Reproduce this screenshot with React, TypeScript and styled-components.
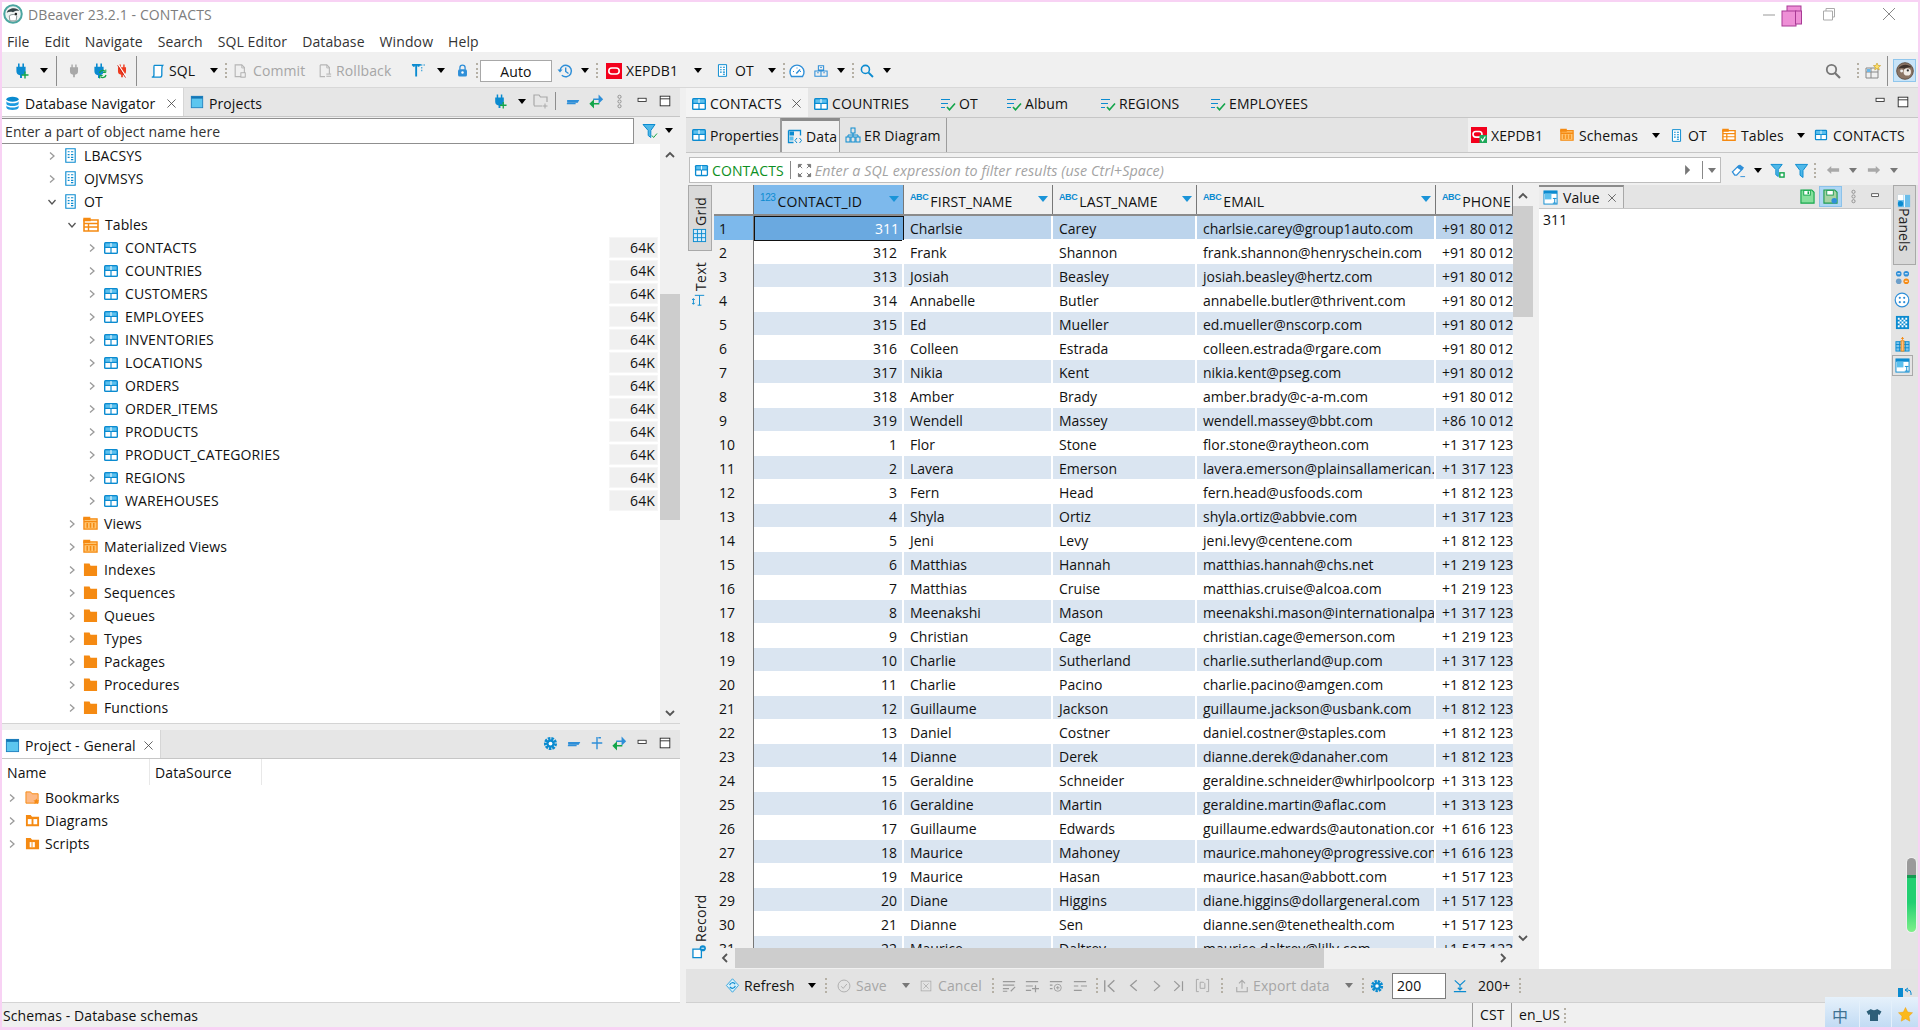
import React from "react";
import styled, { createGlobalStyle } from "styled-components";

const Global = createGlobalStyle`
  html, body { margin: 0; padding: 0; background: #fff; }
  body { font-family: "Open Sans", "Noto Sans", sans-serif; font-size: 14px; letter-spacing: .1px; color: #111; }
  * { box-sizing: border-box; }
`;

const BLUE = "#0b8bd0";
const MID = "#2f8fd8";
const ORANGE = "#f58a12";
const GREEN = "#12a54a";

type IconName =
  | "table" | "schema" | "tables" | "folder" | "plug" | "plugAdd" | "plugSync" | "plugOff" | "script" | "doc" | "docBack"
  | "sqlT" | "lock" | "history" | "oracle" | "oracleOk" | "gauge" | "boxes" | "search" | "perspective" | "dbStack"
  | "projects" | "folderAdd" | "collapse" | "link" | "vdots" | "min" | "max" | "close" | "funnelOk" | "gear" | "plus"
  | "bookmark" | "diagrams" | "scripts" | "dataTab" | "er" | "todo" | "expand" | "grid" | "textT" | "record" | "eraser"
  | "funnelAdd" | "funnel" | "left" | "right" | "save" | "saveAuto" | "panelsI" | "group" | "dotsRound" | "checker" | "calc" | "valueI"
  | "refresh" | "check" | "cancel" | "rEdit" | "rAdd" | "rCopy" | "rDel" | "first" | "prev" | "next" | "last" | "pageBox" | "export" | "fetch" | "schemaF" | "beaver" | "appLogo" | "star" | "shirt";

const Plug = ({ c }: { c: string }) => (
  <path d="M5 0.5h1.6v3.2h2.8V0.5H11v3.2h1.6v4.6a4 4 0 0 1-3.6 3.9V15H7v-2.8a4 4 0 0 1-3.6-3.9V3.7H5z" fill={c} />
);

const shapes: Record<IconName, React.ReactNode> = {
  table: (<><rect x="1" y="2" width="14" height="12" rx="1.5" fill={BLUE} /><rect x="2.4" y="8" width="5" height="4.6" fill="#fff" /><rect x="8.6" y="8" width="5" height="4.6" fill="#fff" /><rect x="2.4" y="3.4" width="11.2" height="3.4" fill="#5cc0ee" /><rect x="7.5" y="3" width="1" height="4" fill="#fff" /></>),
  schema: (<><path d="M3 .8h10v14.4H3z" fill="#fff" stroke={BLUE} strokeWidth="1.2" /><path d="M5 4h2M8.5 4H11M5 7h2M8.5 7H11M5 10h2M8.5 10H11M8.5 12.5H11" stroke={BLUE} strokeWidth="1.3" /></>),
  tables: (<><path d="M1 3h14v11H1z" fill="#fff" stroke={ORANGE} strokeWidth="1.6" /><path d="M1 1.5h6v2H1zM1 6.5h14M1 10h14M5.5 6v8" stroke={ORANGE} strokeWidth="1.4" fill={ORANGE} /></>),
  schemaF: (<><path d="M1 3h14v11H1z" fill="#ffc46f" stroke={ORANGE} strokeWidth="1.4" /><path d="M1 1.5h6v2H1zM1 6h14" stroke={ORANGE} strokeWidth="1.5" fill={ORANGE} /><path d="M4.5 7.5v5M8 7.5v5M11.5 7.5v5" stroke={ORANGE} strokeWidth="1.6" /></>),
  folder: <path d="M1 1.5h6l1 2.5h7v11H1z" fill={ORANGE} />,
  plug: <Plug c="#a8a8a8" />,
  plugAdd: (<><Plug c={BLUE} /><path d="M12 8.5v7M8.5 12h7" stroke={GREEN} strokeWidth="1.4" /></>),
  plugSync: (<><Plug c={BLUE} /><path d="M8.5 10a3.2 3.2 0 0 1 5.5-1.5M15 12a3.2 3.2 0 0 1-5.5 1.5" fill="none" stroke={GREEN} strokeWidth="1.3" /><path d="M14.8 6.5v3h-3M8.7 15.5v-3h3" fill="none" stroke={GREEN} strokeWidth="1" /></>),
  plugOff: (<><Plug c="#ee3b1f" /><path d="M4 1l9 14" stroke="#fff" strokeWidth="1.4" /><path d="M3 1.5l9 14" stroke="#c61a0e" strokeWidth="1" /></>),
  script: (<><path d="M5 1.5h9.5c-1 1-1 3-1 5v6c0 1.5-1 2.5-2.5 2.5H2c1 0 2.5-.8 2.5-2.5v-9C4.5 2 4.6 1.5 5 1.5z" fill="#fff" stroke={BLUE} strokeWidth="1.5" /></>),
  doc: (<><path d="M2.5 1h7.5l3 3v10.5h-10.5z" fill="none" stroke="#b5b5b5" strokeWidth="1.3" /><path d="M10 1v3.5h3" fill="none" stroke="#b5b5b5" /><rect x="9" y="10" width="5" height="5" fill="#f0f0f0" stroke="#a8a8a8" /></>),
  docBack: (<><path d="M2.5 1h7.5l3 3v7M8 14.5H2.5V1" fill="none" stroke="#b5b5b5" strokeWidth="1.3" /><path d="M10 1v3.5h3" fill="none" stroke="#b5b5b5" /><path d="M9.5 11.5h5.5M15 14h-5.5" stroke="#a8a8a8" /></>),
  sqlT: (<><path d="M1 2h9.5M3 2v2M5.5 2v12.5M8 2v2" stroke={BLUE} strokeWidth="2" fill="none" /><path d="M11 2h1M13.5 2h1M11 5h1M11 8h1" stroke={BLUE} strokeWidth="1.6" /></>),
  lock: (<><path d="M4.8 7V4.5a3.2 3.2 0 0 1 6.4 0V7" fill="none" stroke={MID} strokeWidth="1.6" /><rect x="2.5" y="6.5" width="11" height="9" rx="2" fill={MID} /><circle cx="8" cy="10.5" r="1.5" fill="#fff" /></>),
  history: (<><path d="M3 8a5.7 5.7 0 1 1 1.8 4.2" fill="none" stroke={MID} strokeWidth="1.5" /><path d="M.5 6.5l2.5 3 2.6-3" fill={MID} /><path d="M8.7 4.5v4l2.8 2" fill="none" stroke={MID} strokeWidth="1.4" /></>),
  oracle: (<><rect x="0" y="0" width="16" height="16" fill="#f3001c" /><rect x="2.8" y="5" width="10.4" height="6" rx="3" fill="none" stroke="#fff" strokeWidth="1.6" /></>),
  oracleOk: (<><rect x="0" y="0" width="16" height="16" fill="#f3001c" /><rect x="2" y="4.5" width="9" height="5.6" rx="2.8" fill="none" stroke="#fff" strokeWidth="1.6" /><rect x="8.5" y="8" width="7.5" height="8" fill="#1fa85a" /><path d="M10 11.5l1.7 2.4 2.6-4.4" stroke="#fff" strokeWidth="1.2" fill="none" /></>),
  gauge: (<><path d="M2.5 13.5A7 7 0 1 1 13.5 13.5z" fill="#fff" stroke={MID} strokeWidth="1.4" /><path d="M7.3 10.5l3.8-4" stroke={MID} strokeWidth="1.5" /><path d="M4 8.5h1M8 4.5v1M12 8.5h-1" stroke={MID} /></>),
  boxes: (<><path d="M5 2h6v5H5zM1 8h7v6H1zM8 8h7v6H8z" fill="none" stroke={MID} strokeWidth="1.2" /><path d="M7 4h2M3.5 10h2M10.5 10h2" stroke={MID} /></>),
  search: (<><circle cx="6.2" cy="6.2" r="4.6" fill="none" stroke={BLUE} strokeWidth="1.8" /><path d="M9.8 9.8l5 5" stroke={BLUE} strokeWidth="2.2" /></>),
  perspective: (<><path d="M1 5h12v10H1zM1 9h12M6 5v10" fill="none" stroke="#888" /><rect x="2" y="6" width="3.5" height="3" fill="#6db8e8" /><path d="M12 0l1 2.4 2.6.2-2 1.7.7 2.6-2.3-1.4-2.3 1.4.7-2.6-2-1.7 2.6-.2z" fill="#ffe066" stroke="#c49a20" strokeWidth=".6" /></>),
  dbStack: (<><ellipse cx="8" cy="3.5" rx="6.5" ry="2.7" fill={BLUE} /><path d="M1.5 5.5c1 3 12 3 13 0v3c-1 3-12 3-13 0zM1.5 10c1 3 12 3 13 0v2.5c-1 3.2-12 3.2-13 0z" fill="#1c9be0" /></>),
  projects: (<><rect x="1.5" y="1.5" width="13" height="13" fill="#5cc6ef" stroke="#1e80bf" /><rect x="1.5" y="1.5" width="13" height="2.6" fill="#1476b5" /></>),
  folderAdd: (<><path d="M1 12.5V2h5l1.5 2H14v5M9 13H1" fill="none" stroke="#a8a8a8" strokeWidth="1.2" /><path d="M12 10.5v5M9.5 13h5" stroke="#a8a8a8" /></>),
  collapse: <path d="M2 7.5h12l-1 1.8H2zM1 11h10" stroke={MID} strokeWidth="1.4" fill={MID} />,
  link: (<><path d="M4.5 5.5H14M14 5.5l-3-3v6z" stroke={MID} strokeWidth="1.6" fill={MID} /><path d="M1.5 10.5H11M1.5 10.5l3-3v6z" stroke={GREEN} strokeWidth="1.6" fill={GREEN} /></>),
  vdots: (<><circle cx="8" cy="3" r="1.7" fill="none" stroke="#8f8f8f" /><circle cx="8" cy="8" r="1.7" fill="none" stroke="#8f8f8f" /><circle cx="8" cy="13" r="1.7" fill="none" stroke="#8f8f8f" /></>),
  min: <rect x="2.5" y="4" width="10" height="4" fill="#fff" stroke="#222" />,
  max: (<><rect x="2.5" y="2.5" width="11" height="11" fill="#fff" stroke="#222" /><path d="M2.5 5.5h11" stroke="#222" /></>),
  close: <path d="M3 3l10 10M13 3L3 13" stroke="#444" strokeWidth="1" />,
  funnelOk: (<><path d="M1 1.5h12L8.8 7.5v7l-2.6-2V7.5z" fill="#4fb8e8" stroke={BLUE} /><path d="M10 12.5l1.6 2 3.4-4" stroke={GREEN} fill="none" /></>),
  gear: (<><circle cx="8" cy="8" r="5.3" fill="none" stroke={BLUE} strokeWidth="3.4" strokeDasharray="2.6 1" /><circle cx="8" cy="8" r="4.4" fill={BLUE} /><circle cx="8" cy="8" r="2" fill="#fff" /></>),
  plus: <path d="M8 1v14M2 8h12M9.5 2h3" stroke={MID} strokeWidth="1.6" />,
  bookmark: (<><path d="M1 2h5l1.5 2H14v10H1z" fill="#fdb985" stroke={ORANGE} /><path d="M12 9l1 2 2.2.2-1.7 1.4.6 2.2-2.1-1.2-2 1.2.5-2.2-1.6-1.4 2.2-.2z" fill={ORANGE} /></>),
  diagrams: (<><path d="M1 2h5l1.5 2H15v10H1z" fill={ORANGE} /><rect x="3" y="6.5" width="4" height="5.5" fill="#fff" /><rect x="9" y="6.5" width="4" height="5.5" fill="#fff" /></>),
  scripts: (<><path d="M1 2h5l1.5 2H15v10H1z" fill={ORANGE} /><path d="M5 6.5h5.5v5.5H5z" fill="#fff" /><path d="M7.5 6.5v5.5" stroke={ORANGE} /></>),
  dataTab: (<><path d="M1.5 1.5h12v5M1.5 1.5v12h5" fill="none" stroke={BLUE} strokeWidth="1.3" /><rect x="2.5" y="2.5" width="4.5" height="4" fill={BLUE} /><rect x="2.5" y="7.5" width="4" height="4" fill="#5cc0ee" /><path d="M10 9l-2 2.5 2 2.5M12.5 9l2 2.5-2 2.5" fill="none" stroke={BLUE} /></>),
  er: (<><rect x="6" y="1" width="4" height="5" fill="none" stroke={BLUE} /><rect x="1" y="10" width="4" height="5" fill="none" stroke={BLUE} /><rect x="6" y="10" width="4" height="5" fill="none" stroke={BLUE} /><rect x="11" y="10" width="4" height="5" fill="none" stroke={BLUE} /><path d="M8 6v2M3 10V8h10v2M8 8v2" fill="none" stroke={BLUE} /></>),
  todo: (<><path d="M1 3.5h9M1 7.5h7M1 11.5h4" stroke={BLUE} strokeWidth="1.2" /><path d="M7 11l2.5 2.8L15 7.5" fill="none" stroke={GREEN} strokeWidth="1.6" /></>),
  expand: <path d="M1.5 1.5h3.5l-3.500 3.500zM14.500 1.500h-3.500l3.500 3.500zM1.500 14.500h3.500l-3.500-3.500zM14.500 14.500h-3.500l3.500-3.500z M2 2l3.500 3.500M14 2l-3.500 3.500M2 14l3.500-3.500M14 14l-3.500-3.500" stroke="#777" fill="#777" />,
  grid: (<><rect x="1.5" y="1.5" width="13" height="13" fill="#d8ecf8" stroke={BLUE} /><path d="M1.5 6h13M1.500 10.300h13M5.800 1.500v13M10.200 1.500v13" stroke={BLUE} /></>),
  textT: <path d="M3 2.500h10M8 2.500V13M6 13h4M1.500 6v6M0 7.500l1.500-1.500L3 7.500M0 10.500L1.500 12 3 10.500" stroke={BLUE} fill="none" />,
  record: (<><path d="M1 5.500h8l1 1v8H1z" fill="#fff" stroke={BLUE} strokeWidth="1.4" /><circle cx="11.5" cy="4.5" r="3.3" fill={BLUE} /><path d="M10 4.500h3" stroke="#fff" /></>),
  eraser: (<><path d="M1.500 9.500L8 3l4 3.500L6 13H4z" fill="#fff" stroke={MID} strokeWidth="1.4" /><path d="M6 4.800L9.500 1.500l4.500 3.500-3 3z" fill={MID} /><path d="M10 14.500h5" stroke={MID} /></>),
  funnelAdd: (<><path d="M1 1.500h12L8.800 7v7.500l-2.600-2V7z" fill="#4fb8e8" stroke={BLUE} /><rect x="10.5" y="10.5" width="4.5" height="4.5" fill="#fff" stroke={GREEN} strokeWidth="1.5" /></>),
  funnel: <path d="M1.500 1.500h13L9.600 8v7.500l-3.200-2.500V8z" fill="#4fb8e8" stroke={BLUE} />,
  left: <path d="M1 8l5-4.500V6h9v4H6v2.500z" fill="#a9a9a9" />,
  right: <path d="M15 8l-5-4.500V6H1v4h9v2.500z" fill="#a9a9a9" />,
  save: (<><path d="M1 1h11.500L15 3.500V15H1z" fill="#85df9c" stroke="#13a64a" strokeWidth="1.2" /><rect x="4" y="1.5" width="7" height="5" fill="#fff" stroke="#13a64a" /><rect x="8" y="2.5" width="1.6" height="3" fill="#13a64a" /></>),
  saveAuto: (<><path d="M1 1h11.500L15 3.500V15H1z" fill="#a7d3a3" stroke="#1e9c50" strokeWidth="1.2" /><rect x="4" y="1.5" width="7" height="5" fill="#fff" stroke="#1e9c50" /><circle cx="12" cy="12.5" r="3" fill={MID} /></>),
  panelsI: (<><rect x="1" y="1" width="14" height="14" fill="#69bdea" /><rect x="8" y="1" width="1" height="14" fill="#fff" /><rect x="1" y="1" width="6.5" height="6" fill="#fff" /><circle cx="4" cy="11" r="3" fill={BLUE} /></>),
  group: (<><circle cx="4" cy="4" r="3" fill={MID} /><circle cx="12" cy="4" r="3" fill={MID} /><circle cx="4" cy="12" r="3" fill="#6d9fc9" /><circle cx="12" cy="12" r="3" fill={ORANGE} /><path d="M2.500 4h3M10.500 4h3M10.500 12h3" stroke="#fff" /></>),
  dotsRound: (<><circle cx="8" cy="8" r="6.8" fill="#fff" stroke={MID} strokeWidth="1.2" /><circle cx="5.8" cy="5.8" r="1.1" fill={MID} /><circle cx="10.2" cy="5.8" r="1.1" fill={MID} /><circle cx="5.8" cy="10.2" r="1.1" fill={MID} /><circle cx="10.2" cy="10.2" r="1.1" fill={MID} /></>),
  checker: (<><rect x="1" y="1" width="14" height="14" fill={BLUE} /><path d="M3 3h2v2H3zM7 3h2v2H7zM11 3h2v2h-2zM5 5h2v2H5zM9 5h2v2H9zM3 7h2v2H3zM7 7h2v2H7zM11 7h2v2h-2zM5 9h2v2H5zM9 9h2v2H9zM3 11h2v2H3zM7 11h2v2H7zM11 11h2v2h-2z" fill="#fff" /></>),
  calc: (<><rect x="1" y="5" width="14" height="10" fill="#7ec6ee" stroke={BLUE} /><path d="M1 8h14M1 11.500h14M5 5v10M11 5v10" stroke={BLUE} /><rect x="6.5" y="4" width="3" height="11" fill="#fbbf80" stroke={ORANGE} /><path d="M8 0v3M6.500 1.500h3" stroke={ORANGE} /></>),
  valueI: (<><rect x="1" y="1" width="14" height="14" fill="#fff" stroke={BLUE} /><rect x="1" y="1" width="14" height="3" fill={BLUE} /><rect x="2" y="4" width="7" height="6" fill="#5cc0ee" /><path d="M10.500 9h4M12.500 9v5M10.500 14h4" stroke={BLUE} /></>),
  refresh: (<><path d="M8 .8l6.500 7-6.500 7.400L1.500 8z" fill="#d4effb" stroke="#35a4de" /><path d="M5 7.500A3.200 3.200 0 0 1 10.800 6.500M11 8.500a3.200 3.200 0 0 1-5.800 1" fill="none" stroke={BLUE} strokeWidth="1.3" /></>),
  check: (<><circle cx="8" cy="8" r="6.8" fill="none" stroke="#a8a8a8" /><path d="M4.800 8.300l2.300 2.400 4.200-5" fill="none" stroke="#a8a8a8" /></>),
  cancel: (<><rect x="1.5" y="1.5" width="13" height="13" fill="none" stroke="#a8a8a8" /><path d="M4.500 4.500l7 7M11.500 4.500l-7 7" stroke="#a8a8a8" /></>),
  rEdit: <path d="M1 3h14M1 7h13M1 11h7M1 14h5M10 14l5-5" stroke="#9a9a9a" strokeWidth="1.3" fill="none" />,
  rAdd: <path d="M1 3h14M1 8h8M1 13h6M12 7v8M8 11h8" stroke="#9a9a9a" strokeWidth="1.4" fill="none" />,
  rCopy: (<><path d="M1 3h14M1 7h3M1 11h3" stroke="#9a9a9a" strokeWidth="1.3" /><circle cx="10" cy="10" r="4" fill="none" stroke="#9a9a9a" /><path d="M10 8v4M8 10h4" stroke="#9a9a9a" /></>),
  rDel: <path d="M1 3h14M1 8h5M9 8h7M1 13h9" stroke="#9a9a9a" strokeWidth="1.4" />,
  first: <path d="M2 1.500v13M13 1.500L6 8l7 6.500" stroke="#999" strokeWidth="1.6" fill="none" />,
  prev: <path d="M12 1.500L4.500 8l7.500 6.500" stroke="#999" strokeWidth="1.6" fill="none" />,
  next: <path d="M4 1.500L11.500 8 4 14.500" stroke="#999" strokeWidth="1.6" fill="none" />,
  last: <path d="M14 1.500v13M3 1.500L10 8l-7 6.500" stroke="#999" strokeWidth="1.6" fill="none" />,
  pageBox: <path d="M4 1.500H1.500v13H4M12 1.500h2.500v13H12M5.500 4.500h3.500l1.500 1.500v5h-5z" stroke="#a8a8a8" fill="none" />,
  export: <path d="M8 11V1.500M4.500 5L8 1.500 11.500 5M2 9v5.500h12V9" stroke="#a8a8a8" strokeWidth="1.2" fill="none" />,
  fetch: <path d="M1 14.500h14M2 1.500L8 7l6-5.500M8 7v5M5.500 10L8 12.500 10.500 10" stroke={BLUE} strokeWidth="1.3" fill="none" />,
  beaver: (<><circle cx="8" cy="8" r="7.400" fill="#8a7464" stroke="#5d4d42" strokeWidth=".8" /><path d="M2 6c2-4 9-5 12-1-3-1-5 0-6 1-2-1-4-1-6 0z" fill="#3f332c" /><circle cx="10" cy="8.800" r="3.300" fill="#f1ece6" /><circle cx="5" cy="8" r="1.300" fill="#eee" /><circle cx="10.500" cy="7.500" r="1" fill="#333" /></>),
  appLogo: (<><circle cx="8" cy="8" r="7" fill="#eef2f1" stroke="#4aa5a0" strokeWidth="1.6" /><path d="M3 7c1-4 8-5 10-1.500-2-.5-4 0-5 1-1.500-.5-3.500-.5-5 .5z" fill="#37474a" /><path d="M5 9.500c1.500-1.500 5-1.500 6 0l-.5 4h-5z" fill="#fff" stroke="#6a7a7a" strokeWidth=".6" /><circle cx="10.300" cy="8" r="1" fill="#222" /></>),
  star: <path d="M8 .5l2.300 4.900 5.200.7-3.800 3.700.9 5.300L8 12.500l-4.600 2.600.9-5.300L.5 6.100l5.200-.7z" fill="#fbb91d" stroke="#f0a010" strokeWidth=".5" />,
  shirt: <path d="M5 2L0.500 4.500 2.500 8l1.500-.8V14h8V7.200l1.500.8 2-3.500L11 2c-.5 1.500-5.500 1.500-6 0z" fill="#2d5f79" />,
};

const Svg = styled.svg<{ $s: number }>`
  width: ${(p) => p.$s}px;
  height: ${(p) => p.$s}px;
  flex: none;
  display: block;
`;

const Ic = ({ n, s = 16 }: { n: IconName; s?: number }) => (
  <Svg $s={s} viewBox="0 0 16 16">{shapes[n]}</Svg>
);

/* ---------- generic toolbar parts ---------- */
const Slot = styled.span<{ $ml?: number; $w?: number }>`
  display: inline-flex;
  align-items: center;
  justify-content: center;
  flex: none;
  margin-left: ${(p) => p.$ml ?? 0}px;
  ${(p) => (p.$w ? `width: ${p.$w}px;` : "")}
`;

const Label = styled.span<{ $ml?: number; $w?: number; $dim?: boolean }>`
  flex: none;
  white-space: nowrap;
  margin-left: ${(p) => p.$ml ?? 0}px;
  ${(p) => (p.$w ? `width: ${p.$w}px;` : "")}
  color: ${(p) => (p.$dim ? "#a6a6a6" : "#111")};
`;

const StripLabel = styled.span`
  line-height: 31px;
`;

const Caret = styled.span<{ $ml?: number; $grey?: boolean }>`
  flex: none;
  width: 0;
  height: 0;
  margin-left: ${(p) => p.$ml ?? 0}px;
  border-left: 4.5px solid transparent;
  border-right: 4.5px solid transparent;
  border-top: 5px solid ${(p) => (p.$grey ? "#777" : "#000")};
`;

const Dots = styled.span<{ $ml?: number }>`
  flex: none;
  width: 2px;
  height: 15px;
  margin-left: ${(p) => p.$ml ?? 0}px;
  border-left: 2px dotted #b5b0a5;
`;

const Sep = styled.span<{ $ml?: number; $h?: number }>`
  flex: none;
  width: 1px;
  height: ${(p) => p.$h ?? 30}px;
  margin-left: ${(p) => p.$ml ?? 0}px;
  background: #8d8d8d;
`;

/* ---------- page ---------- */
const Page = styled.div`
  position: relative;
  width: 1920px;
  height: 1030px;
  overflow: hidden;
  display: flex;
  flex-direction: column;
  background: #f0f0f0;
  border-top: 2px solid #f8d2f4;
  border-left: 2px solid #f8d2f4;
  border-right: 2px solid #f8d2f4;
  border-bottom: 3px solid #f8d2f4;
`;

const TitleBar = styled.header`
  height: 28px;
  flex: none;
  background: #fff;
  display: flex;
  align-items: center;
  padding-bottom: 4px;
  color: #7d7d7d;
  font-size: 14px;
`;

const TitleText = styled.span`
  margin-left: 5px;
`;

const WinButtons = styled.div`
  margin-left: auto;
  display: flex;
  align-items: center;
  padding-right: 22px;
  gap: 46px;
`;

const WinGlyph = styled.svg`
  width: 14px;
  height: 14px;
  display: block;
`;

const MenuBar = styled.nav`
  height: 22px;
  flex: none;
  background: #fff;
  display: flex;
  align-items: center;
  padding-left: 5px;
  gap: 15px;
  color: #333;
`;

const Toolbar = styled.div`
  height: 36px;
  flex: none;
  display: flex;
  align-items: center;
  padding-top: 2px;
  background: #f0f0f0;
  border-bottom: 1px solid #d8d8d8;
`;

const AutoBox = styled.span`
  flex: none;
  width: 72px;
  height: 22px;
  margin-left: 2px;
  background: #fff;
  border: 1px solid #a8a8a8;
  display: flex;
  align-items: center;
  justify-content: center;
  padding-top: 2px;
`;

const RightTools = styled.div`
  margin-left: auto;
  display: flex;
  align-items: center;
  padding-right: 2px;
`;

const BeaverBtn = styled.span`
  width: 23px;
  height: 23px;
  margin-left: 5px;
  background: #c8e4f8;
  border: 1px solid #90c6ec;
  display: flex;
  align-items: center;
  justify-content: center;
`;

const Main = styled.main`
  flex: 1;
  min-height: 0;
  display: flex;
`;

const LeftCol = styled.section`
  width: 678px;
  flex: none;
  display: flex;
  flex-direction: column;
`;

const StripBar = styled.div<{ $h: number; $bg?: string }>`
  height: ${(p) => p.$h}px;
  flex: none;
  display: flex;
  align-items: stretch;
  background: ${(p) => p.$bg ?? "#e6e6e6"};
  border-bottom: 1px solid #c6c6c6;
`;

const ViewTab = styled.div<{ $w: number }>`
  width: ${(p) => p.$w}px;
  flex: none;
  display: flex;
  align-items: center;
  padding-left: 3px;
  padding-top: 2px;
  gap: 5px;
  background: #fff;
  border-right: 1px solid #d6d6d6;
`;

const TabClose = styled.span`
  margin-left: auto;
  margin-right: 5px;
  display: flex;
`;

const StripTools = styled.div`
  margin-left: auto;
  display: flex;
  align-items: center;
  padding-right: 8px;
  padding-bottom: 2px;
`;

const FilterLine = styled.div`
  height: 27px;
  flex: none;
  display: flex;
  align-items: center;
  background: #f0f0f0;
`;

const FilterInput = styled.div`
  width: 632px;
  height: 26px;
  flex: none;
  background: #fff;
  border: 1px solid #8f8f8f;
  border-width: 1px 1px 1px 0;
  padding-left: 3px;
  padding-top: 2px;
  display: flex;
  align-items: center;
  color: #333;
`;

const TreeWrap = styled.div`
  height: 580px;
  flex: none;
  display: flex;
  background: #fff;
  border-bottom: 1px solid #d4d4d4;
`;

const TreeList = styled.div`
  flex: 1;
  min-width: 0;
  overflow: hidden;
`;

const TreeRow = styled.div<{ $level: number }>`
  height: 23px;
  display: flex;
  align-items: center;
  padding-left: ${(p) => 44 + p.$level * 20}px;
  padding-right: 2px;
  white-space: nowrap;
`;

const Twist = styled.svg`
  width: 12px;
  height: 12px;
  flex: none;
`;

const Twisty = ({ open }: { open?: boolean }) => (
  <Twist viewBox="0 0 12 12">
    <path d={open ? "M2.500 4l3.500 4 3.500-4" : "M4 2.500l4 3.500-4 3.500"} fill="none" stroke={open ? "#555" : "#9a9a9a"} strokeWidth="1.300" />
  </Twist>
);

const TreeIcon = styled.span`
  margin: 0 6px 0 5px;
  display: flex;
`;

const SizeBox = styled.span`
  margin-left: auto;
  width: 49px;
  height: 21px;
  background: #f0f0f0;
  border: 1px solid #f6f6f6;
  text-align: right;
  padding-right: 2px;
  line-height: 19px;
`;

const VScroll = styled.div`
  width: 20px;
  flex: none;
  background: #f0f0f0;
  display: flex;
  flex-direction: column;
  align-items: stretch;
`;

const ScrollEnd = styled.span<{ $push?: boolean }>`
  height: 21px;
  flex: none;
  display: flex;
  align-items: center;
  justify-content: center;
  ${(p) => (p.$push ? "margin-top: auto;" : "")}
`;

const ScrollThumb = styled.span<{ $top: number; $h: number }>`
  height: ${(p) => p.$h}px;
  margin-top: ${(p) => p.$top}px;
  flex: none;
  background: #cdcdcd;
`;

const ChevronSvg = styled.svg`
  width: 12px;
  height: 12px;
  display: block;
`;

const Chevron = ({ dir }: { dir: "up" | "down" | "left" | "right" }) => {
  const d = { up: "M2 8l4-4 4 4", down: "M2 4l4 4 4-4", left: "M8 2L4 6l4 4", right: "M4 2l4 4-4 4" }[dir];
  return (
    <ChevronSvg viewBox="0 0 12 12">
      <path d={d} fill="none" stroke="#555" strokeWidth="1.800" />
    </ChevronSvg>
  );
};

const ProjectArea = styled.div`
  flex: 1;
  min-height: 0;
  margin-top: 6px;
  background: #fff;
  border-bottom: 1px solid #d4d4d4;
  display: flex;
  flex-direction: column;
`;

const ColHead = styled.div`
  height: 26px;
  flex: none;
  display: flex;
  background: #fff;
`;

const ColCell = styled.span<{ $w: number }>`
  width: ${(p) => p.$w}px;
  padding-left: 5px;
  line-height: 28px;
  border-right: 1px solid #e8e8e8;
`;

const ProjectRows = styled.div`
  padding-top: 1px;
`;

const ProjectRow = styled.div`
  height: 23px;
  display: flex;
  align-items: center;
  padding-left: 4px;
`;

const ProjectIcon = styled.span`
  margin: 0 5px 0 7px;
  display: flex;
`;

/* ---------- right column ---------- */
const RightCol = styled.section`
  margin-left: 6px;
  width: 1232px;
  flex: none;
  display: flex;
  flex-direction: column;
  background: #f0f0f0;
`;

const EditorTab = styled.div<{ $active?: boolean; $w: number; $pl?: number }>`
  width: ${(p) => p.$w}px;
  flex: none;
  display: flex;
  align-items: center;
  gap: 3px;
  padding-top: 2px;
  padding-left: ${(p) => p.$pl ?? 5}px;
  background: ${(p) => (p.$active ? "#f4f4f4" : "transparent")};
`;

const SubTab = styled.div<{ $active?: boolean; $w: number }>`
  width: ${(p) => p.$w}px;
  flex: none;
  display: flex;
  align-items: center;
  gap: 3px;
  padding-left: 5px;
  border-right: 1px solid #9c9c9c;
  background: ${(p) => (p.$active ? "#f0f0f0" : "transparent")};
  ${(p) => (p.$active ? "border-top: 3px solid #8b8b8b; border-left: 1px solid #9c9c9c;" : "")}
`;

const Crumbs = styled.div`
  margin-left: auto;
  width: 450px;
  display: flex;
  align-items: center;
  background: #f0f0f0;
`;

const FilterRow = styled.div`
  height: 32px;
  flex: none;
  display: flex;
  align-items: center;
  padding-left: 3px;
  padding-top: 2px;
`;

const SqlFilter = styled.div`
  width: 1032px;
  height: 26px;
  flex: none;
  display: flex;
  align-items: center;
  background: #fff;
  border: 1px solid #bdbdbd;
  padding-left: 4px;
`;

const TableLink = styled.span`
  color: #0c8f22;
  margin-left: 3px;
`;

const MiniDivider = styled.span<{ $ml?: number }>`
  width: 1px;
  height: 18px;
  flex: none;
  background: #888;
  margin-left: ${(p) => p.$ml ?? 0}px;
`;

const Hint = styled.span`
  margin-left: 3px;
  color: #a3a3a3;
  font-style: italic;
  white-space: nowrap;
  font-size: 14.3px;
`;

const Body = styled.div`
  height: 784px;
  flex: none;
  display: flex;
  padding-left: 2px;
`;

const SideTabs = styled.div`
  width: 26px;
  flex: none;
  display: flex;
  flex-direction: column;
`;

const SideTab = styled.div<{ $active?: boolean; $h: number; $mt?: number; $push?: boolean }>`
  width: 24px;
  height: ${(p) => p.$h}px;
  flex: none;
  margin-top: ${(p) => p.$mt ?? 0}px;
  ${(p) => (p.$push ? "margin-top: auto; margin-bottom: 3px;" : "")}
  writing-mode: vertical-rl;
  transform: rotate(180deg);
  display: flex;
  align-items: center;
  gap: 2px;
  padding-top: 7px;
  background: ${(p) => (p.$active ? "#d9d9d9" : "transparent")};
  ${(p) => (p.$active ? "border: 1px solid #a9a9a9;" : "")}
  color: #222;
  font-size: 14px;
  letter-spacing: .3px;
`;

const SideIcon = styled.span`
  transform: rotate(180deg);
  display: flex;
`;

const GridColumn = styled.div`
  width: 819px;
  flex: none;
  display: flex;
  flex-direction: column;
`;

const GridTop = styled.div`
  height: 763px;
  flex: none;
  display: flex;
`;

const GridClip = styled.div`
  width: 799px;
  flex: none;
  overflow: hidden;
  background: #fff;
`;

const COLS = "40px 150px 149px 144px 239px 77px";

const HeadRow = styled.div`
  height: 31px;
  display: grid;
  grid-template-columns: ${COLS};
  background: #f0f0f0;
  border-bottom: 2px solid #8b8b8b;
`;

const HeadCell = styled.div<{ $sel?: boolean }>`
  display: flex;
  align-items: center;
  padding-left: 6px;
  padding-top: 3px;
  overflow: hidden;
  white-space: nowrap;
  border-right: 1px solid #777;
  background: ${(p) => (p.$sel ? "#7db9ec" : "transparent")};
`;

const TypeTag = styled.span<{ $thin?: boolean }>`
  color: ${BLUE};
  font-size: ${(p) => (p.$thin ? 10 : 9)}px;
  font-weight: ${(p) => (p.$thin ? 400 : 700)};
  letter-spacing: -.4px;
  margin-right: 2px;
  align-self: flex-start;
  margin-top: 4px;
  font-family: "Liberation Sans", sans-serif;
`;

const SortMark = styled.span`
  margin-left: auto;
  margin-right: 4px;
  margin-top: -5px;
  flex: none;
  width: 0;
  height: 0;
  border-left: 5px solid transparent;
  border-right: 5px solid transparent;
  border-top: 6px solid #1a94d8;
`;

const DataRow = styled.div<{ $alt?: boolean; $sel?: boolean }>`
  height: 24px;
  display: grid;
  grid-template-columns: ${COLS};
  letter-spacing: 0;
  background: ${(p) => (p.$sel ? "#bcd4ec" : p.$alt ? "#dae5f1" : "#fff")};
  border-bottom: 1px solid #fff;
`;

const RowNum = styled.div<{ $sel?: boolean }>`
  padding-left: 5px;
  line-height: 25px;
  background: ${(p) => (p.$sel ? "#7db9ec" : "#f0f0f0")};
  border-right: 1px solid #777;
  box-shadow: 0 1px 0 #8b8b8b;
`;

const Cell = styled.div<{ $num?: boolean; $focus?: boolean }>`
  padding: 0 5px 0 6px;
  line-height: 25px;
  white-space: nowrap;
  overflow: hidden;
  border-right: 2px solid #fff;
  text-align: ${(p) => (p.$num ? "right" : "left")};
  &:last-child { border-right: 0; padding-right: 0; }
  ${(p) => (p.$focus ? "background:#6aa9e0;color:#fff;outline:1.500px solid #111;outline-offset:-1.500px;border-right:0;" : "")}
`;

const HScroll = styled.div`
  width: 799px;
  height: 20px;
  flex: none;
  display: flex;
  background: #f0f0f0;
  align-items: stretch;
`;

const HEnd = styled.span<{ $push?: boolean }>`
  width: 21px;
  flex: none;
  display: flex;
  align-items: center;
  justify-content: center;
  ${(p) => (p.$push ? "margin-left: auto;" : "")}
`;

const HThumb = styled.span`
  width: 589px;
  flex: none;
  background: #cdcdcd;
`;

const ValuePanel = styled.div`
  width: 352px;
  flex: none;
  margin-left: 6px;
  display: flex;
  flex-direction: column;
  background: #fff;
`;

const ValueTab = styled.div`
  width: 85px;
  flex: none;
  display: flex;
  align-items: center;
  gap: 5px;
  padding-left: 4px;
  background: #ececec;
  border-top: 2px solid #8b8b8b;
  border-right: 1px solid #a8a8a8;
`;

const ValueTools = styled.div`
  margin-left: auto;
  display: flex;
  align-items: center;
  padding-right: 10px;
`;

const AutoSave = styled.span`
  margin-left: 4px;
  width: 23px;
  height: 21px;
  background: #aed6f4;
  border: 1px solid #8cc2ea;
  display: flex;
  align-items: center;
  justify-content: center;
`;

const ValueText = styled.div`
  padding: 1px 4px;
  line-height: 20px;
`;

const PanelsCol = styled.div`
  width: 27px;
  flex: none;
  padding-left: 2px;
  display: flex;
  flex-direction: column;
  align-items: center;
  padding-right: 3px;
  background: #e4e4e4;
`;

const PanelsTab = styled.div`
  width: 23px;
  height: 80px;
  flex: none;
  background: #d9d9d9;
  border: 1px solid #a9a9a9;
  writing-mode: vertical-rl;
  display: flex;
  align-items: center;
  padding-top: 8px;
  color: #222;
  font-size: 14px;
`;

const PanelIcons = styled.div`
  display: flex;
  flex-direction: column;
  align-items: center;
  gap: 7px;
  margin-top: 5px;
  margin-right: 4px;
`;

const PanelBtnOn = styled.span`
  padding: 2px;
  border: 1px solid #a9a9a9;
  display: flex;
  margin-top: -4px;
`;

const BottomBar = styled.div`
  height: 34px;
  flex: none;
  display: flex;
  align-items: center;
  background: #e3e3e3;
  border-bottom: 1px solid #d0d0d0;
`;

const PageInput = styled.span`
  flex: none;
  width: 54px;
  height: 26px;
  margin-left: 8px;
  background: #fff;
  border: 1px solid #7d7d7d;
  padding-left: 4px;
  line-height: 24px;
`;

const StatusBar = styled.footer`
  height: 24px;
  flex: none;
  display: flex;
  align-items: center;
  background: #f0f0f0;
  padding-left: 1px;
`;

const StatusMsg = styled.span`
  width: 1469px;
  flex: none;
  white-space: nowrap;
`;

const StatusCell = styled.span<{ $w: number }>`
  width: ${(p) => p.$w}px;
  height: 24px;
  flex: none;
  border-left: 1px solid #9c9c9c;
  padding-left: 7px;
  line-height: 24px;
`;

/* ---------- overlays (float above the app) ---------- */
const WinSwitch = styled.svg`
  position: absolute;
  left: 1779px;
  top: 3px;
  width: 22px;
  height: 22px;
`;

const LevelBar = styled.div`
  position: absolute;
  left: 1905px;
  top: 856px;
  width: 9px;
  height: 74px;
  border-radius: 5px;
  background: linear-gradient(#9a9a9a 0 17px, #149a52 17px 20px, #22cf72 20px 60%, #7ff08a 100%);
  box-shadow: 0 0 0 1px #eee;
`;

const ImeDock = styled.div`
  position: absolute;
  left: 1823px;
  top: 995px;
  width: 97px;
  height: 35px;
  background: linear-gradient(#e6f1fb, #bcd8f3);
  display: flex;
  align-items: center;
  padding-left: 7px;
  color: #3f7191;
  font-family: "Noto Sans CJK SC", sans-serif;
  font-size: 16px;
`;

const ImeCell = styled.span<{ $w: number }>`
  width: ${(p) => p.$w}px;
  height: 27px;
  display: flex;
  align-items: center;
  justify-content: flex-start;
  border-right: 1px solid #e4f0fb;
  margin-right: 6px;
  &:last-child { border-right: 0; }
`;

const RestoreIcon = styled.span`
  position: absolute;
  left: 1895px;
  top: 985px;
`;

/* ---------- data ---------- */
const schemas = ["LBACSYS", "OJVMSYS"];
const tables = ["CONTACTS", "COUNTRIES", "CUSTOMERS", "EMPLOYEES", "INVENTORIES", "LOCATIONS", "ORDERS", "ORDER_ITEMS", "PRODUCTS", "PRODUCT_CATEGORIES", "REGIONS", "WAREHOUSES"];
const folders = ["Indexes", "Sequences", "Queues", "Types", "Packages", "Procedures", "Functions", "Triggers"];

const rows: [number, string, string, string, string][] = [
  [311, "Charlsie", "Carey", "charlsie.carey@group1auto.com", "+91 80 012 3456"],
  [312, "Frank", "Shannon", "frank.shannon@henryschein.com", "+91 80 012 3457"],
  [313, "Josiah", "Beasley", "josiah.beasley@hertz.com", "+91 80 012 3458"],
  [314, "Annabelle", "Butler", "annabelle.butler@thrivent.com", "+91 80 012 3459"],
  [315, "Ed", "Mueller", "ed.mueller@nscorp.com", "+91 80 012 3460"],
  [316, "Colleen", "Estrada", "colleen.estrada@rgare.com", "+91 80 012 3461"],
  [317, "Nikia", "Kent", "nikia.kent@pseg.com", "+91 80 012 3462"],
  [318, "Amber", "Brady", "amber.brady@c-a-m.com", "+91 80 012 3463"],
  [319, "Wendell", "Massey", "wendell.massey@bbt.com", "+86 10 012 3464"],
  [1, "Flor", "Stone", "flor.stone@raytheon.com", "+1 317 123 4104"],
  [2, "Lavera", "Emerson", "lavera.emerson@plainsallamerican.com", "+1 317 123 4111"],
  [3, "Fern", "Head", "fern.head@usfoods.com", "+1 812 123 4115"],
  [4, "Shyla", "Ortiz", "shyla.ortiz@abbvie.com", "+1 317 123 4126"],
  [5, "Jeni", "Levy", "jeni.levy@centene.com", "+1 812 123 4129"],
  [6, "Matthias", "Hannah", "matthias.hannah@chs.net", "+1 219 123 4136"],
  [7, "Matthias", "Cruise", "matthias.cruise@alcoa.com", "+1 219 123 4138"],
  [8, "Meenakshi", "Mason", "meenakshi.mason@internationalpaper.com", "+1 317 123 4141"],
  [9, "Christian", "Cage", "christian.cage@emerson.com", "+1 219 123 4142"],
  [10, "Charlie", "Sutherland", "charlie.sutherland@up.com", "+1 317 123 4146"],
  [11, "Charlie", "Pacino", "charlie.pacino@amgen.com", "+1 812 123 4150"],
  [12, "Guillaume", "Jackson", "guillaume.jackson@usbank.com", "+1 812 123 4153"],
  [13, "Daniel", "Costner", "daniel.costner@staples.com", "+1 812 123 4153"],
  [14, "Dianne", "Derek", "dianne.derek@danaher.com", "+1 812 123 4200"],
  [15, "Geraldine", "Schneider", "geraldine.schneider@whirlpoolcorp.com", "+1 313 123 4205"],
  [16, "Geraldine", "Martin", "geraldine.martin@aflac.com", "+1 313 123 4206"],
  [17, "Guillaume", "Edwards", "guillaume.edwards@autonation.com", "+1 616 123 4209"],
  [18, "Maurice", "Mahoney", "maurice.mahoney@progressive.com", "+1 616 123 4217"],
  [19, "Maurice", "Hasan", "maurice.hasan@abbott.com", "+1 517 123 4222"],
  [20, "Diane", "Higgins", "diane.higgins@dollargeneral.com", "+1 517 123 4228"],
  [21, "Dianne", "Sen", "dianne.sen@tenethealth.com", "+1 517 123 4229"],
  [22, "Maurice", "Daltrey", "maurice.daltrey@lilly.com", "+1 517 123 4234"],
];

export default function App() {
  return (
    <>
      <Global />
      <Page>
        <TitleBar>
          <Slot $ml={1}><Ic n="appLogo" s={20} /></Slot>
          <TitleText>DBeaver 23.2.1 - CONTACTS</TitleText>
          <WinButtons>
            <WinGlyph viewBox="0 0 14 14"><path d="M1 8h12" stroke="#999" /></WinGlyph>
            <WinGlyph viewBox="0 0 14 14"><path d="M1.500 4h9v9h-9zM4 4V1.500h8.500V10H10.500" fill="none" stroke="#aaa" /></WinGlyph>
            <WinGlyph viewBox="0 0 14 14"><path d="M1 1l12 12M13 1L1 13" stroke="#888" /></WinGlyph>
          </WinButtons>
        </TitleBar>

        <MenuBar>
          {["File", "Edit", "Navigate", "Search", "SQL Editor", "Database", "Window", "Help"].map((m) => (
            <span key={m}>{m}</span>
          ))}
        </MenuBar>

        <Toolbar>
          <Slot $ml={11}><Ic n="plugAdd" /></Slot>
          <Caret $ml={11} />
          <Sep $ml={8} />
          <Slot $ml={10}><Ic n="plug" s={14} /></Slot>
          <Slot $ml={10}><Ic n="plugSync" /></Slot>
          <Slot $ml={8}><Ic n="plugOff" s={14} /></Slot>
          <Sep $ml={7} />
          <Slot $ml={13}><Ic n="script" s={14} /></Slot>
          <Label $ml={5} $w={26}>SQL</Label>
          <Caret $ml={15} />
          <Dots $ml={7} />
          <Slot $ml={6}><Ic n="doc" s={14} /></Slot>
          <Label $ml={6} $w={52} $dim>Commit</Label>
          <Slot $ml={13}><Ic n="docBack" s={14} /></Slot>
          <Label $ml={4} $w={57} $dim>Rollback</Label>
          <Slot $ml={18}><Ic n="sqlT" s={15} /></Slot>
          <Caret $ml={11} />
          <Slot $ml={11}><Ic n="lock" s={13} /></Slot>
          <Dots $ml={7} />
          <AutoBox>Auto</AutoBox>
          <Slot $ml={5}><Ic n="history" /></Slot>
          <Caret $ml={8} />
          <Dots $ml={7} />
          <Slot $ml={8}><Ic n="oracle" /></Slot>
          <Label $ml={4} $w={52}>XEPDB1</Label>
          <Caret $ml={16} />
          <Slot $ml={14}><Ic n="schema" s={13} /></Slot>
          <Label $ml={6} $w={20}>OT</Label>
          <Caret $ml={13} />
          <Dots $ml={7} />
          <Slot $ml={4}><Ic n="gauge" /></Slot>
          <Slot $ml={9}><Ic n="boxes" s={14} /></Slot>
          <Caret $ml={9} />
          <Dots $ml={7} />
          <Slot $ml={6}><Ic n="search" s={14} /></Slot>
          <Caret $ml={9} />
          <RightTools>
            <Svg $s={16} viewBox="0 0 16 16"><circle cx="6.500" cy="6.500" r="4.700" fill="none" stroke="#777" strokeWidth="1.800" /><path d="M10 10l5 5" stroke="#777" strokeWidth="2.200" /></Svg>
            <Dots $ml={16} />
            <Slot $ml={6}><Ic n="perspective" /></Slot>
            <Sep $ml={6} />
            <BeaverBtn><Ic n="beaver" s={18} /></BeaverBtn>
          </RightTools>
        </Toolbar>

        <Main>
          <LeftCol>
            <StripBar $h={29}>
              <ViewTab $w={182}>
                <Ic n="dbStack" s={15} />
                <span>Database Navigator</span>
                <TabClose><Ic n="close" s={13} /></TabClose>
              </ViewTab>
              <Slot $ml={6}><Ic n="projects" s={14} /></Slot>
              <Label $ml={5}><StripLabel>Projects</StripLabel></Label>
              <StripTools>
                <Slot><Ic n="plugAdd" s={15} /></Slot>
                <Caret $ml={11} />
                <Slot $ml={7}><Ic n="folderAdd" /></Slot>
                <Sep $ml={6} $h={18} />
                <Slot $ml={10}><Ic n="collapse" s={14} /></Slot>
                <Slot $ml={9}><Ic n="link" s={15} /></Slot>
                <Slot $ml={8}><Ic n="vdots" s={15} /></Slot>
                <Slot $ml={9}><Ic n="min" s={13} /></Slot>
                <Slot $ml={9}><Ic n="max" s={14} /></Slot>
              </StripTools>
            </StripBar>
            <FilterLine>
              <FilterInput>Enter a part of object name here</FilterInput>
              <Slot $ml={8}><Ic n="funnelOk" /></Slot>
              <Caret $ml={7} />
            </FilterLine>
            <TreeWrap>
              <TreeList>
                {schemas.map((s) => (
                  <TreeRow key={s} $level={0}><Twisty /><TreeIcon><Ic n="schema" s={15} /></TreeIcon>{s}</TreeRow>
                ))}
                <TreeRow $level={0}><Twisty open /><TreeIcon><Ic n="schema" s={15} /></TreeIcon>OT</TreeRow>
                <TreeRow $level={1}><Twisty open /><TreeIcon><Ic n="tables" /></TreeIcon>Tables</TreeRow>
                {tables.map((t) => (
                  <TreeRow key={t} $level={2}><Twisty /><TreeIcon><Ic n="table" /></TreeIcon>{t}<SizeBox>64K</SizeBox></TreeRow>
                ))}
                <TreeRow $level={1}><Twisty /><TreeIcon><Ic n="schemaF" s={15} /></TreeIcon>Views</TreeRow>
                <TreeRow $level={1}><Twisty /><TreeIcon><Ic n="schemaF" s={15} /></TreeIcon>Materialized Views</TreeRow>
                {folders.map((f) => (
                  <TreeRow key={f} $level={1}><Twisty /><TreeIcon><Ic n="folder" s={15} /></TreeIcon>{f}</TreeRow>
                ))}
              </TreeList>
              <VScroll>
                <ScrollEnd><Chevron dir="up" /></ScrollEnd>
                <ScrollThumb $top={129} $h={226} />
                <ScrollEnd $push><Chevron dir="down" /></ScrollEnd>
              </VScroll>
            </TreeWrap>

            <ProjectArea>
              <StripBar $h={29}>
                <ViewTab $w={159}>
                  <Ic n="projects" s={15} />
                  <span>Project - General</span>
                  <TabClose><Ic n="close" s={13} /></TabClose>
                </ViewTab>
                <StripTools>
                  <Slot><Ic n="gear" s={15} /></Slot>
                  <Slot $ml={9}><Ic n="collapse" s={14} /></Slot>
                  <Slot $ml={9}><Ic n="plus" s={14} /></Slot>
                  <Slot $ml={8}><Ic n="link" s={15} /></Slot>
                  <Slot $ml={9}><Ic n="min" s={13} /></Slot>
                  <Slot $ml={9}><Ic n="max" s={14} /></Slot>
                </StripTools>
              </StripBar>
              <ColHead>
                <ColCell $w={148}>Name</ColCell>
                <ColCell $w={112}>DataSource</ColCell>
              </ColHead>
              <ProjectRows>
                <ProjectRow><Twisty /><ProjectIcon><Ic n="bookmark" s={15} /></ProjectIcon>Bookmarks</ProjectRow>
                <ProjectRow><Twisty /><ProjectIcon><Ic n="diagrams" s={15} /></ProjectIcon>Diagrams</ProjectRow>
                <ProjectRow><Twisty /><ProjectIcon><Ic n="scripts" s={15} /></ProjectIcon>Scripts</ProjectRow>
              </ProjectRows>
            </ProjectArea>
          </LeftCol>

          <RightCol>
            <StripBar $h={30}>
              <EditorTab $active $w={122}><Ic n="table" /><span>CONTACTS</span><TabClose><Ic n="close" s={13} /></TabClose></EditorTab>
              <EditorTab $w={124}><Ic n="table" /><span>COUNTRIES</span></EditorTab>
              <EditorTab $w={66} $pl={8}><Ic n="todo" /><span>OT</span></EditorTab>
              <EditorTab $w={94} $pl={8}><Ic n="todo" /><span>Album</span></EditorTab>
              <EditorTab $w={110} $pl={8}><Ic n="todo" /><span>REGIONS</span></EditorTab>
              <EditorTab $w={120} $pl={8}><Ic n="todo" /><span>EMPLOYEES</span></EditorTab>
              <StripTools>
                <Slot><Ic n="min" s={13} /></Slot>
                <Slot $ml={9}><Ic n="max" s={14} /></Slot>
              </StripTools>
            </StripBar>
            <StripBar $h={35} $bg="#e4e4e4">
              <SubTab $w={95}><Ic n="table" /><span>Properties</span></SubTab>
              <SubTab $active $w={59}><Ic n="dataTab" /><span>Data</span></SubTab>
              <SubTab $w={107}><Ic n="er" /><span>ER Diagram</span></SubTab>
              <Crumbs>
                <Slot $ml={3}><Ic n="oracleOk" /></Slot>
                <Label $ml={4} $w={52}>XEPDB1</Label>
                <Slot $ml={17}><Ic n="schemaF" s={14} /></Slot>
                <Label $ml={5} $w={58}>Schemas</Label>
                <Caret $ml={15} />
                <Slot $ml={10}><Ic n="schema" s={13} /></Slot>
                <Label $ml={5} $w={18}>OT</Label>
                <Slot $ml={16}><Ic n="tables" s={14} /></Slot>
                <Label $ml={5} $w={41}>Tables</Label>
                <Caret $ml={15} />
                <Slot $ml={9}><Ic n="table" s={14} /></Slot>
                <Label $ml={5} $w={73}>CONTACTS</Label>
              </Crumbs>
            </StripBar>
            <FilterRow>
              <SqlFilter>
                <Ic n="table" s={15} />
                <TableLink>CONTACTS</TableLink>
                <MiniDivider $ml={6} />
                <Slot $ml={6}><Ic n="expand" s={15} /></Slot>
                <Hint>Enter a SQL expression to filter results (use Ctrl+Space)</Hint>
                <Slot $ml={519}><Svg $s={10} viewBox="0 0 10 14"><path d="M1 0l7 7-7 7z" fill="#777" /></Svg></Slot>
                <MiniDivider $ml={9} />
                <Caret $ml={5} $grey />
              </SqlFilter>
              <Slot $ml={10}><Ic n="eraser" s={15} /></Slot>
              <Caret $ml={8} />
              <Slot $ml={8}><Ic n="funnelAdd" s={15} /></Slot>
              <Slot $ml={9}><Ic n="funnel" s={15} /></Slot>
              <Dots $ml={5} />
              <Slot $ml={10}><Ic n="left" s={14} /></Slot>
              <Caret $ml={9} $grey />
              <Slot $ml={10}><Ic n="right" s={14} /></Slot>
              <Caret $ml={9} $grey />
            </FilterRow>

            <Body>
              <SideTabs>
                <SideTab $active $h={66}><SideIcon><Ic n="grid" s={15} /></SideIcon>Grid</SideTab>
                <SideTab $h={52} $mt={12}><SideIcon><Ic n="textT" s={15} /></SideIcon>Text</SideTab>
                <SideTab $h={74} $push><SideIcon><Ic n="record" s={15} /></SideIcon>Record</SideTab>
              </SideTabs>

              <GridColumn>
                <GridTop>
                  <GridClip>
                    <HeadRow>
                      <HeadCell />
                      <HeadCell $sel><TypeTag $thin>123</TypeTag>CONTACT_ID<SortMark /></HeadCell>
                      <HeadCell><TypeTag>ABC</TypeTag>FIRST_NAME<SortMark /></HeadCell>
                      <HeadCell><TypeTag>ABC</TypeTag>LAST_NAME<SortMark /></HeadCell>
                      <HeadCell><TypeTag>ABC</TypeTag>EMAIL<SortMark /></HeadCell>
                      <HeadCell><TypeTag>ABC</TypeTag>PHONE</HeadCell>
                    </HeadRow>
                    {rows.map((r, i) => (
                      <DataRow key={r[0]} $sel={i === 0} $alt={i % 2 === 0}>
                        <RowNum $sel={i === 0}>{i + 1}</RowNum>
                        <Cell $num $focus={i === 0}>{r[0]}</Cell>
                        <Cell>{r[1]}</Cell>
                        <Cell>{r[2]}</Cell>
                        <Cell>{r[3]}</Cell>
                        <Cell>{r[4]}</Cell>
                      </DataRow>
                    ))}
                  </GridClip>
                  <VScroll>
                    <ScrollEnd><Chevron dir="up" /></ScrollEnd>
                    <ScrollThumb $top={0} $h={111} />
                    <ScrollEnd $push><Chevron dir="down" /></ScrollEnd>
                  </VScroll>
                </GridTop>
                <HScroll>
                  <HEnd><Chevron dir="left" /></HEnd>
                  <HThumb />
                  <HEnd $push><Chevron dir="right" /></HEnd>
                </HScroll>
              </GridColumn>

              <ValuePanel>
                <StripBar $h={24} $bg="#e4e4e4">
                  <ValueTab><Ic n="valueI" s={15} /><span>Value</span><TabClose><Ic n="close" s={12} /></TabClose></ValueTab>
                  <ValueTools>
                    <Slot><Ic n="save" s={15} /></Slot>
                    <AutoSave><Ic n="saveAuto" s={15} /></AutoSave>
                    <Slot $ml={4}><Ic n="vdots" s={15} /></Slot>
                    <Slot $ml={9}><Ic n="min" s={11} /></Slot>
                  </ValueTools>
                </StripBar>
                <ValueText>311</ValueText>
              </ValuePanel>

              <PanelsCol>
                <PanelsTab><Ic n="panelsI" s={14} />Panels</PanelsTab>
                <PanelIcons>
                  <Ic n="group" s={15} />
                  <Ic n="dotsRound" s={16} />
                  <Ic n="checker" s={15} />
                  <Ic n="calc" s={15} />
                  <PanelBtnOn><Ic n="valueI" s={15} /></PanelBtnOn>
                </PanelIcons>
              </PanelsCol>
            </Body>

            <BottomBar>
              <Slot $ml={39}><Ic n="refresh" s={15} /></Slot>
              <Label $ml={4} $w={49}>Refresh</Label>
              <Caret $ml={15} />
              <Dots $ml={9} />
              <Slot $ml={10}><Ic n="check" s={14} /></Slot>
              <Label $ml={5} $w={30} $dim>Save</Label>
              <Caret $ml={16} $grey />
              <Slot $ml={10}><Ic n="cancel" s={12} /></Slot>
              <Label $ml={6} $w={43} $dim>Cancel</Label>
              <Dots $ml={11} />
              <Slot $ml={8}><Ic n="rEdit" s={14} /></Slot>
              <Slot $ml={9}><Ic n="rAdd" s={14} /></Slot>
              <Slot $ml={10}><Ic n="rCopy" s={14} /></Slot>
              <Slot $ml={10}><Ic n="rDel" s={14} /></Slot>
              <Dots $ml={9} />
              <Slot $ml={5}><Ic n="first" s={14} /></Slot>
              <Slot $ml={10}><Ic n="prev" s={13} /></Slot>
              <Slot $ml={11}><Ic n="next" s={12} /></Slot>
              <Slot $ml={9}><Ic n="last" s={12} /></Slot>
              <Slot $ml={11}><Ic n="pageBox" s={15} /></Slot>
              <Dots $ml={11} />
              <Slot $ml={12}><Ic n="export" s={14} /></Slot>
              <Label $ml={4} $w={77} $dim>Export data</Label>
              <Caret $ml={15} $grey />
              <Dots $ml={9} />
              <Slot $ml={6}><Ic n="gear" s={14} /></Slot>
              <PageInput>200</PageInput>
              <Slot $ml={7}><Ic n="fetch" s={14} /></Slot>
              <Label $ml={11} $w={32}>200+</Label>
              <Dots $ml={9} />
            </BottomBar>
          </RightCol>
        </Main>

        <StatusBar>
          <StatusMsg>Schemas - Database schemas</StatusMsg>
          <StatusCell $w={39}>CST</StatusCell>
          <StatusCell $w={53}>en_US</StatusCell>
          <Dots />
        </StatusBar>

        <WinSwitch viewBox="0 0 22 22">
          <rect x="6" y="1" width="14" height="14" fill="#ee8fd6" stroke="#a83a95" />
          <rect x="1" y="6" width="14" height="15" fill="#ee8fd6" stroke="#a83a95" />
          <rect x="14.500" y="6" width="6" height="13" fill="#ee8fd6" stroke="#a83a95" />
        </WinSwitch>
        <LevelBar />
        <RestoreIcon><Svg $s={16} viewBox="0 0 16 16"><rect x="1" y="1" width="5" height="12" fill={BLUE} /><path d="M8 3h3a3 3 0 0 1 3 3v2M8 3l3-2M8 3l3 2M8 14h7" stroke={BLUE} fill="none" /></Svg></RestoreIcon>
        <ImeDock>
          <ImeCell $w={31}>中</ImeCell>
          <ImeCell $w={28}><Ic n="shirt" /></ImeCell>
          <ImeCell $w={20}><Ic n="star" s={15} /></ImeCell>
        </ImeDock>
      </Page>
    </>
  );
}
